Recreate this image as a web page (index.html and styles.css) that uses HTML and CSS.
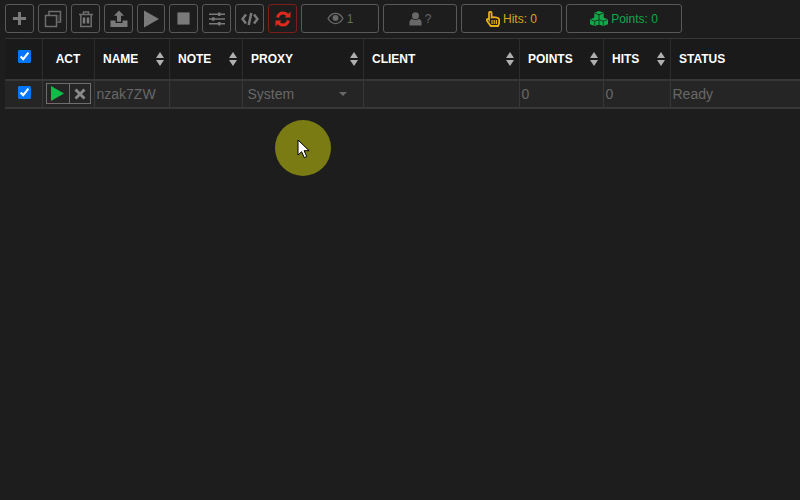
FILE: index.html
```html
<!DOCTYPE html>
<html lang="en">
<head>
    <meta charset="UTF-8">
    <title>Sessions</title>
    <link rel="stylesheet" href="styles.css">
</head>
<body>
    <div class="toolbar">
        <button class="tool"><svg class="icon" viewBox="0 0 16 16"><path d="M6.400 1h3.200v5.400H15v3.200H9.600V15H6.400V9.600H1V6.400h5.400z"/></svg></button>
        <button class="tool"><svg class="icon wide" viewBox="0 0 18 18"><path class="line" d="M5 5V1.500h11.500v10.500H13"/><path class="line" d="M1.500 5.500h11v11h-11z"/><path class="tint" d="M13 5h3v6.500h-3z"/></svg></button>
        <button class="tool"><svg class="icon wide" viewBox="0 0 18 18"><path class="line" d="M2 4.500h14M6.500 4.500V2h5v2.500M3.800 4.500V16.500h10.400V4.500"/><path class="thick" d="M7 7.500v6M11 7.500v6"/></svg></button>
        <button class="tool"><svg class="icon wide" viewBox="0 0 18 18"><path d="M9 .5l5 5.200h-3v6H7v-6H4zM.5 10.500H5.500v2.500h7v-2.500h5V17H.5z"/></svg></button>
        <button class="tool tool-narrow"><svg class="icon wide" viewBox="0 0 18 18"><path d="M2 .5l15 8.500-15 8.500z"/></svg></button>
        <button class="tool"><svg class="icon" viewBox="0 0 16 16"><path d="M1.500 1.500h13v13h-13z"/></svg></button>
        <button class="tool"><svg class="icon wide" viewBox="0 0 18 18"><path d="M1 3.500h9V2.500h2.500v1H17V5h-4.500v1H10V5H1zM1 8.300h3V7.300h2.500v1H17v1.500H6.500v1H4v-1H1zM1 13h9v-1h2.500v1H17v1.500h-4.500v1H10v-1H1z"/></svg></button>
        <button class="tool"><svg class="icon wide" viewBox="0 0 18 18"><path class="thick" d="M5 4.500L1.500 9 5 13.500M13 4.500L16.500 9 13 13.500M10.300 3L7.700 15"/></svg></button>
        <button class="tool tool-red"><svg class="icon wide" viewBox="0 0 18 18"><path class="reload" d="M3.500 7.500C4.500 4.500 6.500 3 9 3c2 0 3.500.8 4.800 2.300M14.500 10.500C13.500 13.500 11.500 15 9 15c-2 0-3.500-.8-4.800-2.300"/><path class="reload-tip" d="M16.500 1.500v6h-6zM1.500 16.500v-6h6z"/></svg></button>
        <div class="stat stat-views"><svg class="stat-icon" viewBox="0 0 18 14"><path class="eye" d="M1 7c2-3.500 4.800-5.500 8-5.500S15 3.500 17 7c-2 3.500-4.800 5.500-8 5.500S3 10.500 1 7z"/><circle cx="9" cy="6.500" r="3.200"/></svg> 1</div>
        <div class="stat stat-users"><svg class="stat-icon user" viewBox="0 0 14 15"><circle cx="7" cy="4" r="3.800"/><path d="M.5 14.500V11c0-2 1.500-3.500 3-3.500 1 .7 2.200 1 3.500 1s2.500-.3 3.500-1c1.500 0 3 1.500 3 3.500v3.500z"/></svg> ?</div>
        <div class="stat stat-hits"><svg class="stat-icon hand" viewBox="0 0 14 16"><path d="M3 2c0-1.600 2.600-1.600 2.600 0v4.500c1.500-.5 6.900-.3 7.500 1.500v4.500L12 15H4.700L1 9.800c-.8-1.500 1-2.600 2-1.300z"/><path class="hand-lines" d="M6 9v4M8.200 9v4M10.400 9v4"/></svg> Hits: 0</div>
        <div class="stat stat-points"><svg class="stat-icon cubes" viewBox="0 0 18 15"><path d="M9 0l4.700 1.700v5L9 8.400 4.300 6.700v-5zM4.700 6.600l4.300 1.600 4.300-1.600 4.700 1.700v5L13.300 15 9 13.400 4.700 15 0 13.300v-5z"/><path class="cube-lines" d="M4.800 2.200L9 3.700l4.200-1.500M9 3.700V8M.6 8.700l4.100 1.500 4.300-1.500M4.700 10.200V14.500M9 8.700l4.300 1.500 4.100-1.500M13.300 10.200V14.500M9 8.500V13.400"/></svg> Points: 0</div>
    </div>

    <table class="grid">
        <colgroup>
            <col class="c-check"><col class="c-act"><col class="c-name"><col class="c-note"><col class="c-proxy">
            <col class="c-client"><col class="c-points"><col class="c-hits"><col>
        </colgroup>
        <thead>
            <tr>
                <th class="center"><input type="checkbox" checked></th>
                <th class="center">ACT</th>
                <th class="sort">NAME</th>
                <th class="sort">NOTE</th>
                <th class="sort">PROXY</th>
                <th class="sort">CLIENT</th>
                <th class="sort">POINTS</th>
                <th class="sort">HITS</th>
                <th>STATUS</th>
            </tr>
        </thead>
        <tbody>
            <tr>
                <td class="center"><input type="checkbox" checked></td>
                <td class="act-cell">
                    <div class="act">
                        <span class="act-btn act-play"><svg viewBox="0 0 14 16" width="13" height="15"><path d="M0 0l14 8-14 8z"/></svg></span>
                        <span class="act-btn act-close"><svg viewBox="0 0 12 12" width="12" height="12"><path d="M2.500.5L6 4 9.500.5l2 2L8 6l3.500 3.500-2 2L6 8l-3.500 3.500-2-2L4 6 .5 2.500z"/></svg></span>
                    </div>
                </td>
                <td>nzak7ZW</td>
                <td></td>
                <td class="proxy-cell"><div class="select">System<span class="caret"></span></div></td>
                <td></td>
                <td>0</td>
                <td>0</td>
                <td>Ready</td>
            </tr>
        </tbody>
    </table>

    <!-- click marker, follows the mouse in the recording -->
    <div class="marker">
        <svg class="pointer" viewBox="0 0 13 20" width="13" height="20"><path d="M1 1v15l3.600-3.300 2.700 6 2.500-1.100-2.700-5.900h5z"/></svg>
    </div>
</body>
</html>
```

FILE: styles.css
```css
html, body {
    height: 100%;
}

body {
    margin: 0;
    overflow: hidden;
    background-color: #1c1d1c;
    font-family: "Liberation Sans", Arial, sans-serif;
    font-size: 14px;
    color: #686868;
}

.toolbar {
    display: flex;
    gap: 4px;
    height: 29px;
    padding: 4px 0 0 5px;
}

.tool {
    display: flex;
    align-items: center;
    justify-content: center;
    width: 29px;
    height: 29px;
    padding: 0;
    background: transparent;
    border: 1px solid #595959;
    border-radius: 3px;
    flex: none;
}

.tool-narrow {
    width: 28px;
}

.tool-red {
    border-color: #7a2018;
}

.icon {
    width: 15px;
    height: 15px;
    fill: #7a7a7a;
}

.icon.wide {
    width: 18px;
    height: 18px;
}

.line {
    fill: none;
    stroke: #6e6e6e;
    stroke-width: 1.500;
}

.tint {
    fill: #3c3c3c;
}

.thick {
    fill: none;
    stroke: #7a7a7a;
    stroke-width: 2.500;
}

.reload {
    fill: none;
    stroke: #e0281c;
    stroke-width: 3;
}

.reload-tip {
    fill: #e0281c;
}

.stat {
    display: flex;
    align-items: center;
    justify-content: center;
    gap: 3px;
    height: 27px;
    border: 1px solid #595959;
    border-radius: 3px;
    font-size: 12px;
    flex: none;
}

.stat-views {
    width: 76px;
}

.stat-users {
    width: 72px;
}

.stat-hits {
    width: 99px;
    color: #d9a520;
}

.stat-points {
    width: 114px;
    color: #13a84a;
}

.stat-icon {
    width: 17px;
    height: 13px;
    fill: #686868;
}

.eye {
    fill: none;
    stroke: #686868;
    stroke-width: 1.500;
}

.stat-icon.user {
    width: 13px;
    height: 14px;
}

.stat-icon.hand {
    width: 14px;
    height: 16px;
    fill: none;
    stroke: #e6b011;
    stroke-width: 1.800;
}

.hand-lines {
    stroke-width: 1.200;
}

.stat-icon.cubes {
    width: 18px;
    height: 15px;
    fill: #13a84a;
}

.cube-lines {
    fill: none;
    stroke: #1c1d1c;
    stroke-width: .8;
}

.grid {
    width: 795px;
    margin: 5px 0 0 5px;
    border-collapse: collapse;
    table-layout: fixed;
}

.c-check { width: 37px; }
.c-act { width: 52px; }
.c-name { width: 75px; }
.c-note { width: 73px; }
.c-proxy { width: 121px; }
.c-client { width: 156px; }
.c-points { width: 84px; }
.c-hits { width: 67px; }

.grid th {
    position: relative;
    height: 41px;
    padding: 0 8.500px;
    box-sizing: border-box;
    border-top: 1px solid #373737;
    border-bottom: 2px solid #373737;
    border-left: 1px solid #2c2c2c;
    background-color: #1a1a1a;
    color: #fff;
    font-size: 12px;
    font-weight: bold;
    text-align: left;
}

.grid th:first-child,
.grid td:first-child {
    border-left: none;
}

.grid td {
    height: 28px;
    padding: 0 2px;
    box-sizing: border-box;
    border-bottom: 2px solid #373737;
    border-left: 1px solid #373737;
    background-color: #252525;
    color: #686868;
}

.grid .center {
    padding: 0;
    text-align: center;
}

.grid input {
    display: block;
    width: 13px;
    height: 13px;
    margin: 0 auto;
    position: relative;
    top: -2px;
    left: 1px;
}

.grid td input {
    top: -1px;
}

/* sort arrows in the header */
.sort::before,
.sort::after {
    content: '';
    position: absolute;
    right: 5px;
    border-left: 4.500px solid transparent;
    border-right: 4.500px solid transparent;
}

.sort::before {
    top: 13px;
    border-bottom: 6px solid #b0b0b0;
}

.sort::after {
    top: 21px;
    border-top: 6px solid #b0b0b0;
}

.grid .act-cell {
    padding: 0 0 0 3px;
}

.act {
    display: flex;
    width: 45px;
    height: 21px;
    border: 1px solid #6e6e6e;
    box-sizing: border-box;
}

.act-btn {
    display: flex;
    align-items: center;
    justify-content: center;
}

.act-play {
    width: 22px;
    border-right: 1px solid #6e6e6e;
}

.act-play svg {
    fill: #10bc48;
}

.act-close {
    flex: 1;
}

.act-close svg {
    fill: #8a8a8a;
}

.grid .proxy-cell {
    padding: 0 16px 0 5px;
}

.select {
    display: flex;
    align-items: center;
    justify-content: space-between;
}

.caret {
    border-left: 4px solid transparent;
    border-right: 4px solid transparent;
    border-top: 4px solid #686868;
}

.marker {
    position: absolute;
    left: 275px;
    top: 120px;
    width: 56px;
    height: 56px;
    border-radius: 50%;
    background-color: #7b7b14;
}

.pointer {
    position: absolute;
    left: 22px;
    top: 19px;
    fill: #fff;
    stroke: #000;
    stroke-width: 1;
}
```
